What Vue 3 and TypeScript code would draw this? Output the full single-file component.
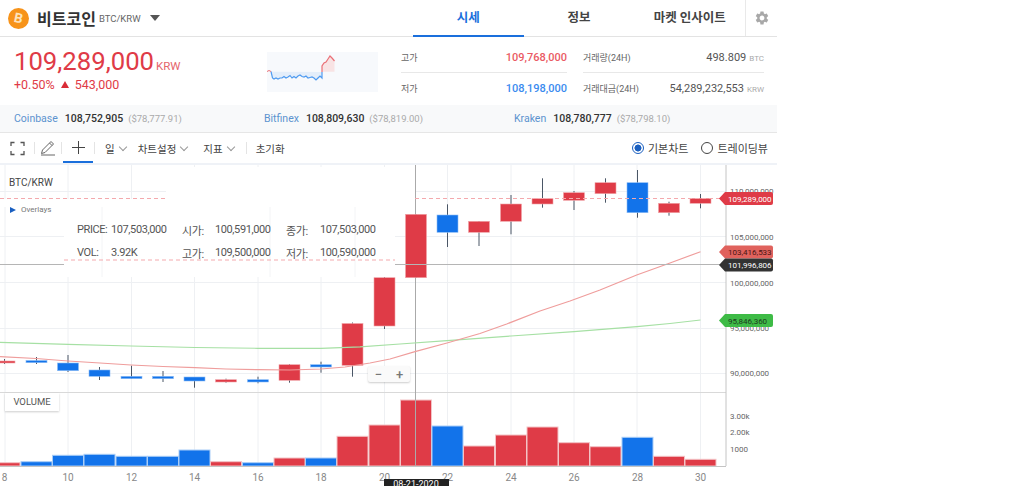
<template>
  <div class="page">
    <header class="top-bar">
      <div class="coin">
        <svg class="coin-logo" width="21" height="21" viewBox="0 0 20 20">
          <circle cx="10" cy="10" r="10" fill="#f7931a" />
          <text x="10" y="14" text-anchor="middle" class="coin-b" transform="rotate(12 10 10)">B</text>
        </svg>
        <span class="coin-name">비트코인</span>
        <span class="coin-pair">BTC/KRW</span>
        <span class="caret"></span>
      </div>
      <nav class="tabs">
        <a class="tab active">시세</a>
        <a class="tab">정보</a>
        <a class="tab">마켓 인사이트</a>
      </nav>
      <div class="gear">
        <svg width="16" height="16" viewBox="0 0 24 24" fill="#a8a8a8">
          <path d="M19.14 12.94c.04-.3.06-.61.06-.94 0-.32-.02-.64-.07-.94l2.03-1.58a.49.49 0 0 0 .12-.61l-1.92-3.32a.488.488 0 0 0-.59-.22l-2.39.96c-.5-.38-1.03-.7-1.62-.94l-.36-2.54a.484.484 0 0 0-.48-.41h-3.84c-.24 0-.43.17-.47.41l-.36 2.54c-.59.24-1.13.57-1.62.94l-2.39-.96c-.22-.08-.47 0-.59.22L2.74 8.87c-.12.21-.08.47.12.61l2.03 1.58c-.05.3-.09.63-.09.94s.02.64.07.94l-2.03 1.58a.49.49 0 0 0-.12.61l1.92 3.32c.12.22.37.29.59.22l2.39-.96c.5.38 1.03.7 1.62.94l.36 2.54c.05.24.24.41.48.41h3.84c.24 0 .44-.17.47-.41l.36-2.54c.59-.24 1.13-.56 1.62-.94l2.39.96c.22.08.47 0 .59-.22l1.92-3.32c.12-.22.07-.47-.12-.61l-2.01-1.58zM12 15.6c-1.98 0-3.6-1.62-3.6-3.6s1.62-3.6 3.6-3.6 3.6 1.62 3.6 3.6-1.62 3.6-3.6 3.6z" />
        </svg>
      </div>
    </header>

    <section class="summary">
      <div class="price-box">
        <div class="price-line">
          <span class="price">109,289,000</span>
          <span class="price-unit">KRW</span>
        </div>
        <div class="change">
          <span>+0.50%</span>
          <i class="up-mark"></i>
          <span>543,000</span>
        </div>
      </div>
      <svg class="spark" width="111" height="40" viewBox="267 52 111 40">
        <rect x="267" y="52" width="111" height="40" fill="#f7f9fc" />
        <path :d="sparkBlueFill" fill="#e4eefa" />
        <path :d="sparkRedFill" fill="#f8e3e4" />
        <polyline :points="sparkBlue.join(' ')" fill="none" stroke="#4f9bf0" stroke-width="1.2" />
        <polyline :points="sparkRed.join(' ')" fill="none" stroke="#ea6f76" stroke-width="1.2" />
        <polyline points="267,71.5 269,70.5 271,71.5" fill="none" stroke="#ea6f76" stroke-width="1" />
      </svg>
      <div class="stats">
        <div v-for="s in stats" :key="s.label" class="stat">
          <span class="stat-label">{{ s.label }}</span>
          <span class="stat-value" :class="s.color">{{ s.value }}<small v-if="s.unit">{{ s.unit }}</small></span>
        </div>
      </div>
    </section>

    <section class="exchanges">
      <div v-for="e in exchanges" :key="e.name" class="exchange">
        <span class="ex-name">{{ e.name }}</span>
        <span class="ex-price">{{ e.price }}</span>
        <span class="ex-usd">{{ e.usd }}</span>
      </div>
    </section>

    <section class="toolbar">
      <div class="tool full">
        <svg width="15" height="15" viewBox="0 0 15 15" fill="none" stroke="#555" stroke-width="1.3">
          <path d="M1 5V1.5h3.5M10.5 1.5H14V5M14 10v3.5h-3.5M4.5 13.5H1V10" />
        </svg>
      </div>
      <i class="tool-sep"></i>
      <div class="tool pen">
        <svg width="16" height="16" viewBox="0 0 16 16" fill="none" stroke="#666" stroke-width="1">
          <path d="M1.5 13.5l1-3.5 8.5-8.5 2.5 2.5-8.5 8.5-3.5 1zM9.5 3l2.5 2.5M1 15h14" />
        </svg>
      </div>
      <i class="tool-sep"></i>
      <div class="tool cross">
        <svg width="15" height="15" viewBox="0 0 15 15" stroke="#444" stroke-width="1">
          <path d="M7.5 1v13M1 7.5h13" />
        </svg>
      </div>
      <i class="tool-sep"></i>
      <div class="menu first">일<span class="chev"></span></div>
      <div class="menu second">차트설정<span class="chev"></span></div>
      <div class="menu third">지표<span class="chev"></span></div>
      <i class="tool-sep last"></i>
      <div class="menu reset">초기화</div>
      <div class="radios">
        <label class="radio on"><i></i>기본차트</label>
        <label class="radio"><i></i>트레이딩뷰</label>
      </div>
    </section>

    <section class="chart">
      <svg class="plot" width="777" height="321" viewBox="0 165 777 321">
        <!-- grid -->
        <g stroke="#eef0f3" stroke-width="1">
          <line v-for="x in gridX" :key="'v' + x" :x1="x" :x2="x" y1="165" y2="466" />
          <line v-for="y in gridY" :key="'h' + y" x1="0" x2="726" :y1="y" :y2="y" />
        </g>
        <rect x="166" y="167" width="249" height="40" fill="#fff" />
        <rect x="0" y="199" width="166" height="8" fill="#fff" />
        <rect x="64" y="207" width="331" height="70" fill="#fff" />
        <g stroke="#f3f4f6">
          <line x1="102" x2="102" y1="207" y2="277" />
          <line x1="270" x2="270" y1="207" y2="277" />
          <line x1="355" x2="355" y1="207" y2="277" />
        </g>
        <line x1="0" x2="726" y1="392.5" y2="392.5" stroke="#d9d9d9" />

        <!-- volume -->
        <rect
          v-for="c in candles"
          :key="'vol' + c.day"
          :x="dayX(c.day) - 15.5"
          :y="c.vol"
          width="31"
          :height="466 - c.vol"
          :fill="c.up ? '#df3b47' : '#1273ea'"
          :stroke="c.up ? '#f3c3c6' : '#a9cdf7'"
          stroke-width="1"
        />

        <line x1="415.5" x2="415.5" y1="165" y2="466" stroke="#aaa" stroke-width="1" />

        <!-- candles -->
        <g v-for="c in candles" :key="'c' + c.day">
          <line :x1="dayX(c.day)" :x2="dayX(c.day)" :y1="c.hi" :y2="c.lo" stroke="#4a5666" stroke-width="1" />
          <rect
            :x="dayX(c.day) - 10.5"
            :y="c.top"
            width="21"
            :height="c.bot - c.top"
            :fill="c.up ? '#df3b47' : '#1273ea'"
            :stroke="c.up ? '#f0a5a9' : '#8dbdf5'"
            stroke-width="0.6"
          />
        </g>

        <!-- moving averages -->
        <polyline :points="maGreen" fill="none" stroke="#a6e0a4" stroke-width="1.2" />
        <polyline :points="maRed" fill="none" stroke="#ef9d9c" stroke-width="1.2" />

        <!-- dashed price marks -->
        <line x1="0" x2="166" y1="198.5" y2="198.5" class="dash" />
        <line x1="415" x2="720" y1="198.5" y2="198.5" class="dash" />
        <line x1="64" x2="395" y1="260" y2="260" class="dash" />

        <!-- crosshair -->
        <line x1="0" x2="64" y1="264.5" y2="264.5" stroke="#b5b5b5" />
        <line x1="395" x2="726" y1="264.5" y2="264.5" stroke="#b5b5b5" />

        <!-- axes -->
        <line x1="726" x2="726" y1="165" y2="466" stroke="#c4c4c4" />
        <line x1="0" x2="726" y1="466.5" y2="466.5" stroke="#c4c4c4" />
        <text v-for="p in priceTicks" :key="p.label" x="730" :y="p.y + 3" class="axis-y">{{ p.label }}</text>
        <text v-for="v in volTicks" :key="v.label" x="730" :y="v.y + 3" class="axis-y">{{ v.label }}</text>
        <text v-for="d in dayTicks" :key="'d' + d" :x="dayX(d)" y="480.5" text-anchor="middle" class="axis-x">{{ d }}</text>

        <!-- price tags -->
        <g v-for="t in tags" :key="t.label">
          <path
            :d="`M${719} ${t.y} l6 -6.5 h46 q2 0 2 2 v9 q0 2 -2 2 h-46 z`"
            :fill="t.bg"
          />
          <text x="728" :y="t.y + 3" class="tag-text" :fill="t.color">{{ t.label }}</text>
        </g>

        <rect x="384" y="479" width="65" height="10" fill="#222" />
        <text x="416" y="487" text-anchor="middle" class="date-text">08-21-2020</text>
      </svg>

      <div class="pair-label">BTC/KRW</div>
      <div class="overlays"><i></i>Overlays</div>

      <div class="legend">
        <template v-for="row in legend" :key="row[0]">
          <span v-for="cell in row" :key="cell">{{ cell }}</span>
        </template>
      </div>

      <div class="zoom-box"><span>−</span><span>+</span></div>
      <div class="volume-box">VOLUME</div>
    </section>
  </div>
</template>

<script setup lang="ts">
interface Candle {
  day: number
  up: boolean
  top: number
  bot: number
  hi: number
  lo: number
  vol: number
}

const stats = [
  { label: '고가', value: '109,768,000', color: 'red', unit: '' },
  { label: '거래량(24H)', value: '498.809', color: '', unit: 'BTC' },
  { label: '저가', value: '108,198,000', color: 'blue', unit: '' },
  { label: '거래대금(24H)', value: '54,289,232,553', color: '', unit: 'KRW' }
]

const exchanges = [
  { name: 'Coinbase', price: '108,752,905', usd: '($78,777.91)' },
  { name: 'Bitfinex', price: '108,809,630', usd: '($78,819.00)' },
  { name: 'Kraken', price: '108,780,777', usd: '($78,798.10)' }
]

const legend = [
  ['PRICE:', '107,503,000', '시가:', '100,591,000', '종가:', '107,503,000'],
  ['VOL:', '3.92K', '고가:', '109,500,000', '저가:', '100,590,000']
]

const sparkBlue = [
  '271,71.5', '272.5,78', '274,79', '276,78', '278,79', '280,78', '282,78', '284,76.5', '286,78',
  '288,77', '290,75.5', '292,78', '294,76.5', '296,78', '298,76', '300,75', '302,76.5', '304,77',
  '306,76', '308,78', '310,77.5', '312,77', '314,78', '316,80', '318,78', '320,76', '322,78', '322,72'
]
const sparkRed = ['322,72', '322,66', '324,63', '326,62', '328,59', '330,56', '332,58', '334.5,61']
const sparkBlueFill = 'M271 71.7 L' + sparkBlue.slice(1).join(' L') + ' Z'
const sparkRedFill = 'M322 71.7 L' + sparkRed.slice(1).join(' L') + ' L334.5 71.7 Z'

const dayX = (d: number) => Math.round((68 + (d - 10) * 31.63) * 2) / 2

const candles: Candle[] = [
  { day: 8, up: true, top: 361, bot: 363, hi: 359, lo: 364, vol: 462.7 },
  { day: 9, up: false, top: 360.5, bot: 362.7, hi: 357, lo: 364, vol: 461.7 },
  { day: 10, up: false, top: 363, bot: 370.7, hi: 355, lo: 372, vol: 455.3 },
  { day: 11, up: false, top: 370, bot: 376.3, hi: 367, lo: 380, vol: 454.3 },
  { day: 12, up: false, top: 376.3, bot: 378.7, hi: 365.7, lo: 378.7, vol: 456.3 },
  { day: 13, up: false, top: 376.3, bot: 378.7, hi: 371, lo: 382, vol: 456.3 },
  { day: 14, up: false, top: 377, bot: 381, hi: 377, lo: 387.7, vol: 450 },
  { day: 15, up: true, top: 379.7, bot: 382, hi: 378.7, lo: 382.7, vol: 461.7 },
  { day: 16, up: false, top: 379.7, bot: 382, hi: 376.7, lo: 383.3, vol: 462.7 },
  { day: 17, up: true, top: 364.7, bot: 380.3, hi: 364, lo: 382.7, vol: 458 },
  { day: 18, up: false, top: 364.7, bot: 367, hi: 361.7, lo: 372.7, vol: 458 },
  { day: 19, up: true, top: 323.5, bot: 365.3, hi: 322.5, lo: 376.7, vol: 436.3 },
  { day: 20, up: true, top: 277.7, bot: 326, hi: 277, lo: 329, vol: 425 },
  { day: 21, up: true, top: 214.3, bot: 277.7, hi: 214, lo: 278, vol: 400 },
  { day: 22, up: false, top: 215, bot: 232.3, hi: 204.3, lo: 247, vol: 426 },
  { day: 23, up: true, top: 221.3, bot: 232.3, hi: 221, lo: 246, vol: 446 },
  { day: 24, up: true, top: 204, bot: 221.3, hi: 195, lo: 234.3, vol: 435 },
  { day: 25, up: true, top: 198.7, bot: 204, hi: 178.3, lo: 207.7, vol: 427 },
  { day: 26, up: true, top: 192.7, bot: 200.3, hi: 191, lo: 210, vol: 442.7 },
  { day: 27, up: true, top: 182.7, bot: 193.7, hi: 178.3, lo: 202.7, vol: 446.7 },
  { day: 28, up: false, top: 182.7, bot: 212.7, hi: 170, lo: 217.7, vol: 437.3 },
  { day: 29, up: true, top: 203.3, bot: 212.7, hi: 201.7, lo: 215.7, vol: 456.3 },
  { day: 30, up: true, top: 198.3, bot: 203.3, hi: 194, lo: 208.3, vol: 459.3 }
]

const maRed =
  '0,356.7 36,358.5 68,361 100,363 131,365 163,366.5 195,367.7 226,369 258,369.7 290,370 321,369 345,367 370,363 390,359 415,351.7 447,343 480,333.5 506.7,324 540,311 570,301 600,290 636.7,275 670,263 700.5,251.7'
const maGreen =
  '0,342.3 68,344.3 131,346 195,347.5 258,348.3 321,348.3 360,346.8 400,344 447,340.7 511,336 574,331.7 637,326.7 670,323.5 700.5,320'

const gridX = [5, 68, 131.5, 194.5, 258, 321, 384.5, 447.5, 511, 574, 637, 700.5]
const gridY = [191.5, 236.5, 282.5, 328.5, 373.5]

const priceTicks = [
  { label: '110,000,000', y: 191 },
  { label: '105,000,000', y: 236.7 },
  { label: '100,000,000', y: 282.7 },
  { label: '95,000,000', y: 328 },
  { label: '90,000,000', y: 373 }
]
const volTicks = [
  { label: '3.00k', y: 415.5 },
  { label: '2.00k', y: 432 },
  { label: '1000', y: 449 }
]
const dayTicks = [8, 10, 12, 14, 16, 18, 20, 22, 24, 26, 28, 30]

const tags = [
  { label: '95,846,360', y: 320.5, bg: '#3ebb46', color: '#1d3a1f' },
  { label: '103,416,533', y: 252, bg: '#e0625d', color: '#4a1513' },
  { label: '101,996,806', y: 265, bg: '#333333', color: '#ffffff' },
  { label: '109,289,000', y: 198.5, bg: '#df3b47', color: '#ffffff' }
]
</script>

<style scoped>
.page {
  width: 777px;
  height: 486px;
  overflow: hidden;
  background: #fff;
  font-family: Roboto, "Noto Sans CJK KR", sans-serif;
  color: #333;
}

.top-bar {
  display: flex;
  height: 37px;
  box-sizing: border-box;
  border-bottom: 1px solid #e3e3e3;
}

.coin {
  display: flex;
  align-items: center;
  width: 413px;
  padding-left: 8px;
  box-sizing: border-box;
}

.coin-logo {
  margin-right: 8px;
}

.coin-b {
  font-size: 13px;
  font-weight: 700;
  fill: #fde3bd;
}

.coin-name {
  font-size: 16px;
  font-weight: 700;
  color: #333;
}

.coin-pair {
  margin-left: 3px;
  font-size: 9.5px;
  color: #666;
}

.caret {
  margin-left: 9px;
  border-left: 5.5px solid transparent;
  border-right: 5.5px solid transparent;
  border-top: 6px solid #555;
}

.tabs {
  display: flex;
  width: 332px;
}

.tab {
  flex: 1;
  text-align: center;
  line-height: 36px;
  font-size: 12.5px;
  font-weight: 700;
  color: #444;
  margin-bottom: -1px;
}

.tab.active {
  color: #1a6fdc;
  border-bottom: 2px solid #1a6fdc;
  height: 35px;
}

.gear {
  flex: 1;
  display: flex;
  align-items: center;
  justify-content: center;
  border-left: 1px solid #e9e9e9;
}

.summary {
  display: flex;
  height: 68px;
}

.price-box {
  width: 267px;
  padding: 9px 0 0 14px;
  box-sizing: border-box;
}

.price-line {
  display: flex;
  align-items: baseline;
  height: 30px;
}

.price {
  font-size: 25.7px;
  line-height: 30px;
  color: #df3b47;
}

.price-unit {
  margin-left: 2px;
  font-size: 11.5px;
  color: #e5646c;
}

.change {
  display: flex;
  align-items: center;
  gap: 6px;
  margin-top: 1px;
  font-size: 12.5px;
  color: #df3b47;
}

.up-mark {
  border-left: 4px solid transparent;
  border-right: 4px solid transparent;
  border-bottom: 7px solid #d92b36;
}

.spark {
  margin-top: 15px;
  flex: none;
}

.stats {
  display: grid;
  grid-template-columns: 166px 181px;
  grid-auto-rows: 30px;
  column-gap: 16px;
  margin: 6px 0 0 23px;
}

.stat {
  display: flex;
  justify-content: space-between;
  align-items: center;
}

.stat:nth-child(-n + 2) {
  border-bottom: 1px solid #e8e8e8;
}

.stat-label {
  font-size: 9px;
  color: #666;
}

.stat-value {
  font-size: 11px;
  color: #555;
}

.stat-value.red {
  color: #ea5a64;
  font-weight: 500;
}

.stat-value.blue {
  color: #3a8bef;
  font-weight: 500;
}

.stat-value small {
  margin-left: 3px;
  font-size: 8px;
  color: #aaa;
}

.exchanges {
  display: flex;
  height: 28px;
  box-sizing: border-box;
  padding-left: 14px;
  background: #f8f9fa;
  border-bottom: 1px solid #e6e6e6;
  align-items: center;
}

.exchange {
  width: 250px;
  display: flex;
  align-items: baseline;
}

.ex-name {
  font-size: 10.5px;
  color: #5c93cf;
  margin-right: 7px;
}

.ex-price {
  font-size: 10.5px;
  font-weight: 500;
  color: #333;
  margin-right: 5px;
}

.ex-usd {
  font-size: 9.5px;
  color: #aaa;
}

.toolbar {
  display: flex;
  align-items: center;
  height: 30px;
  font-size: 10.5px;
  color: #444;
  border-bottom: 2px solid #eff2f7;
}

.tool {
  display: flex;
  align-items: center;
  justify-content: center;
  height: 30px;
}

.full {
  width: 33px;
  margin-left: 1px;
}

.pen {
  width: 26px;
}

.cross {
  width: 30px;
  box-sizing: border-box;
  border-bottom: 2px solid #1a6fdc;
  margin: 0 1px;
}

.tool-sep {
  width: 1px;
  height: 12px;
  background: #e4e4e4;
}

.tool-sep.last {
  margin-left: 12px;
}

.menu {
  display: flex;
  align-items: center;
  margin-left: 12px;
}

.menu.first {
  margin-left: 10px;
}

.menu.second {
  margin-left: 12px;
}

.menu.third {
  margin-left: 16px;
}

.menu.reset {
  margin-left: 9px;
}

.chev {
  width: 5px;
  height: 5px;
  margin: -3px 0 0 5px;
  border-right: 1px solid #999;
  border-bottom: 1px solid #999;
  transform: rotate(45deg);
}

.radios {
  display: flex;
  gap: 13px;
  margin-left: auto;
  padding-right: 9px;
}

.radio {
  display: flex;
  align-items: center;
  gap: 4px;
  font-size: 11px;
}

.radio i {
  width: 12px;
  height: 12px;
  box-sizing: border-box;
  border-radius: 50%;
  border: 1px solid #444;
}

.radio.on i {
  border-color: #1a5fc0;
  background: radial-gradient(circle, #1a5fc0 3.2px, #fff 3.8px);
}

.chart {
  position: relative;
  height: 321px;
}

.plot {
  display: block;
}

.dash {
  stroke: #f4a9ad;
  stroke-width: 1;
  stroke-dasharray: 4 3;
}

.axis-y {
  font-size: 8px;
  fill: #666;
}

.axis-x {
  font-size: 10px;
  fill: #888;
}

.tag-text {
  font-size: 8px;
}

.date-text {
  font-size: 9px;
  fill: #fff;
}

.pair-label {
  position: absolute;
  left: 9px;
  top: 12px;
  font-size: 10px;
  line-height: 12px;
  color: #444;
}

.overlays {
  position: absolute;
  left: 10px;
  top: 40px;
  display: flex;
  align-items: center;
  gap: 5px;
  font-size: 8px;
  line-height: 10px;
  color: #777;
}

.overlays i {
  border-top: 3px solid transparent;
  border-bottom: 3px solid transparent;
  border-left: 6px solid #1a5fc0;
}

.legend {
  position: absolute;
  left: 77px;
  top: 53px;
  display: grid;
  grid-template-columns: 34px 71px 33px 71px 34px auto;
  grid-auto-rows: 23px;
  align-items: center;
  font-size: 11px;
  letter-spacing: -0.4px;
  color: #555;
}

.zoom-box {
  position: absolute;
  left: 368px;
  top: 201px;
  width: 42px;
  height: 16px;
  display: flex;
  justify-content: space-around;
  align-items: center;
  background: #fafafa;
  border-radius: 2px;
  box-shadow: 0 1px 2px rgba(0, 0, 0, 0.2);
  font-size: 13px;
  font-weight: 500;
  color: #777;
}

.volume-box {
  position: absolute;
  left: 5px;
  top: 228px;
  width: 54px;
  height: 18px;
  text-align: center;
  line-height: 18px;
  font-size: 9.5px;
  color: #555;
  background: #fff;
  box-shadow: 0 1px 2px rgba(0, 0, 0, 0.2);
}
</style>
